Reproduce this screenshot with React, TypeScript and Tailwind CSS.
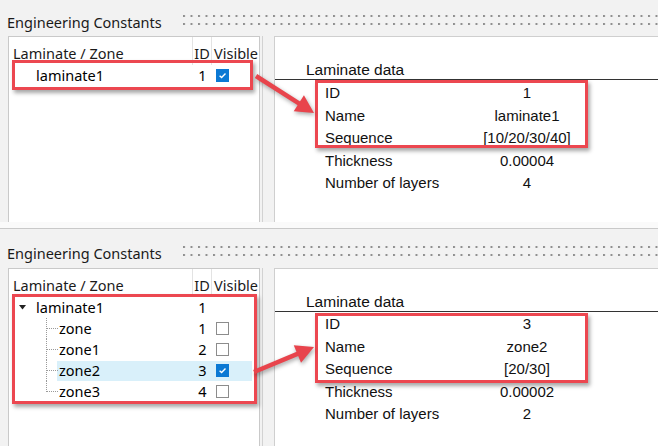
import React from 'react';

type TreeItem = {
  name: string;
  id: string;
  level: 0 | 1;
  checked?: boolean;
  noBox?: boolean;
  expanded?: boolean;
  selected?: boolean;
  last?: boolean;
};

type DataRow = { label: string; value: string };

const Checkbox = ({ on }: { on: boolean }) =>
  on ? (
    <span className="flex h-[13px] w-[13px] items-center justify-center bg-[#0b79d4]">
      <svg width="9" height="9" viewBox="0 0 9 9">
        <path d="M1.6 4.7 3.6 6.5 7.5 2.5" stroke="white" strokeWidth="1.4" fill="none" />
      </svg>
    </span>
  ) : (
    <span className="block h-[13px] w-[13px] border border-[#8c8c8c] bg-white" />
  );

const TreeRow = ({ item }: { item: TreeItem }) => (
  <div className={`relative flex h-[21px] items-center ${item.level === 0 ? 'pl-[25px]' : 'pl-[48px]'}`}>
    {item.expanded && (
      <svg className="absolute left-[10px] top-[8px]" width="7" height="5" viewBox="0 0 7 5">
        <path d="M0 0h7L3.5 4.5z" fill="#222" />
      </svg>
    )}
    {item.level === 1 && (
      <>
        <span
          className={`absolute left-[37px] top-0 border-l border-dotted border-[#9a9a9a] ${item.last ? 'h-[11px]' : 'h-[21px]'}`}
        />
        <span className="absolute left-[38px] top-[10px] w-[11px] border-t border-dotted border-[#9a9a9a]" />
      </>
    )}
    <div className={`mr-[7px] flex h-[20px] flex-1 items-center ${item.selected ? 'bg-[#d9f0fa]' : ''}`}>
      <span className="flex-1 pl-[2px]">{item.name}</span>
      <span className="w-[19px] text-center">{item.id}</span>
      <span className="flex w-[40px] pl-[4px]">{!item.noBox && <Checkbox on={!!item.checked} />}</span>
    </div>
  </div>
);

const Section = ({
  titleH,
  titlePt,
  bodyH,
  dataPt,
  tree,
  data,
}: {
  titleH: string;
  titlePt: string;
  bodyH: string;
  dataPt: string;
  tree: TreeItem[];
  data: DataRow[];
}) => (
  <div className="flex flex-col">
    <div className={`flex items-start overflow-hidden ${titleH} ${titlePt}`}>
      <span className="shrink-0 whitespace-nowrap pl-[7px] text-[14.5px] leading-[20px] text-[#1a1a1a]">
        Engineering Constants
      </span>
      <svg className="ml-[21px] mt-[3px] shrink-0" width="480" height="11">
        <defs>
          <pattern id="dots" width="7.5" height="8" patternUnits="userSpaceOnUse">
            <rect x="0" y="0" width="2" height="2" fill="#8f8f8f" />
          </pattern>
        </defs>
        <rect width="480" height="11" fill="url(#dots)" />
      </svg>
    </div>
    <div className={`flex pl-[8px] ${bodyH}`}>
      <div className="w-[252px] border border-b-0 border-[#c9c9c9] bg-white text-[14.5px] text-black">
        <div className="flex h-[28px] whitespace-nowrap leading-[20px] text-[#1a1a1a]">
          <div className="w-[184px] border-r border-[#e3e3e3] pl-[4px] pt-[6px]">Laminate / Zone</div>
          <div className="w-[19px] border-r border-[#e3e3e3] pt-[6px] text-center">ID</div>
          <div className="pl-[2px] pt-[6px]">Visible</div>
        </div>
        {tree.map((t) => (
          <TreeRow key={t.name} item={t} />
        ))}
      </div>
      <div className="w-[3px] border-r border-[#d2d2d2]" />
      <div className="ml-[11px] flex-1 border-l border-t border-[#cfcfcf] bg-white font-['Liberation_Sans',Arial,sans-serif] text-[#111]">
        <div className="h-[42px] pl-[31px] pt-[24px] text-[15.5px] leading-[18px]">Laminate data</div>
        <div className="h-px bg-[#333]" />
        <div className={dataPt}>
          {data.map((r) => (
            <div key={r.label} className="flex h-[22.5px] items-center whitespace-nowrap text-[15px]">
              <span className="w-[200px] pl-[50px]">{r.label}</span>
              <span className="w-[104px] text-center">{r.value}</span>
            </div>
          ))}
        </div>
      </div>
    </div>
  </div>
);

const Arrow = ({ x1, y1, x2, y2 }: { x1: number; y1: number; x2: number; y2: number }) => {
  const dx = x2 - x1;
  const dy = y2 - y1;
  const len = Math.hypot(dx, dy);
  const ux = dx / len;
  const uy = dy / len;
  const L = 18;
  const W = 9.5;
  const bx = x2 - ux * L;
  const by = y2 - uy * L;
  const pts = `${x2},${y2} ${bx - uy * W},${by + ux * W} ${bx + uy * W},${by - ux * W}`;
  return (
    <g>
      <line x1={x1} y1={y1} x2={bx + ux * 2} y2={by + uy * 2} stroke="#e8444c" strokeWidth="4.5" />
      <polygon points={pts} fill="#e8444c" />
    </g>
  );
};

const RedBox = ({ className }: { className: string }) => (
  <div className={`absolute border-[3px] border-[#ec4750] shadow-[2px_3px_4px_rgba(0,0,0,0.35)] ${className}`} />
);

export default function App() {
  return (
    <div className="relative h-[446px] w-[658px] overflow-hidden bg-[#f2f2f2] font-['Noto_Sans','Open_Sans',sans-serif]">
      <Section
        titleH="h-[36px]"
        titlePt="pt-[12px]"
        bodyH="h-[186px]"
        dataPt="pt-[2px]"
        tree={[{ name: 'laminate1', id: '1', level: 0, checked: true }]}
        data={[
          { label: 'ID', value: '1' },
          { label: 'Name', value: 'laminate1' },
          { label: 'Sequence', value: '[10/20/30/40]' },
          { label: 'Thickness', value: '0.00004' },
          { label: 'Number of layers', value: '4' },
        ]}
      />
      <div className="h-[6px] bg-[#fafafa]" />
      <div className="h-px bg-[#c9c9c9]" />
      <Section
        titleH="h-[39px]"
        titlePt="pt-[14px]"
        bodyH="h-[178px]"
        dataPt="pt-[1px]"
        tree={[
          { name: 'laminate1', id: '1', level: 0, noBox: true, expanded: true },
          { name: 'zone', id: '1', level: 1 },
          { name: 'zone1', id: '2', level: 1 },
          { name: 'zone2', id: '3', level: 1, checked: true, selected: true },
          { name: 'zone3', id: '4', level: 1, last: true },
        ]}
        data={[
          { label: 'ID', value: '3' },
          { label: 'Name', value: 'zone2' },
          { label: 'Sequence', value: '[20/30]' },
          { label: 'Thickness', value: '0.00002' },
          { label: 'Number of layers', value: '2' },
        ]}
      />

      <RedBox className="left-[12px] top-[60px] h-[30px] w-[241px]" />
      <RedBox className="left-[315px] top-[80px] h-[68px] w-[273px]" />
      <RedBox className="left-[12px] top-[294px] h-[110px] w-[245px]" />
      <RedBox className="left-[315px] top-[313px] h-[70px] w-[273px]" />

      <svg
        className="pointer-events-none absolute left-0 top-0 drop-shadow-[1px_2px_2px_rgba(0,0,0,0.35)]"
        width="658"
        height="446"
      >
        <Arrow x1={256} y1={76} x2={314} y2={113} />
        <Arrow x1={254} y1={372} x2={314} y2={347} />
      </svg>
    </div>
  );
}
